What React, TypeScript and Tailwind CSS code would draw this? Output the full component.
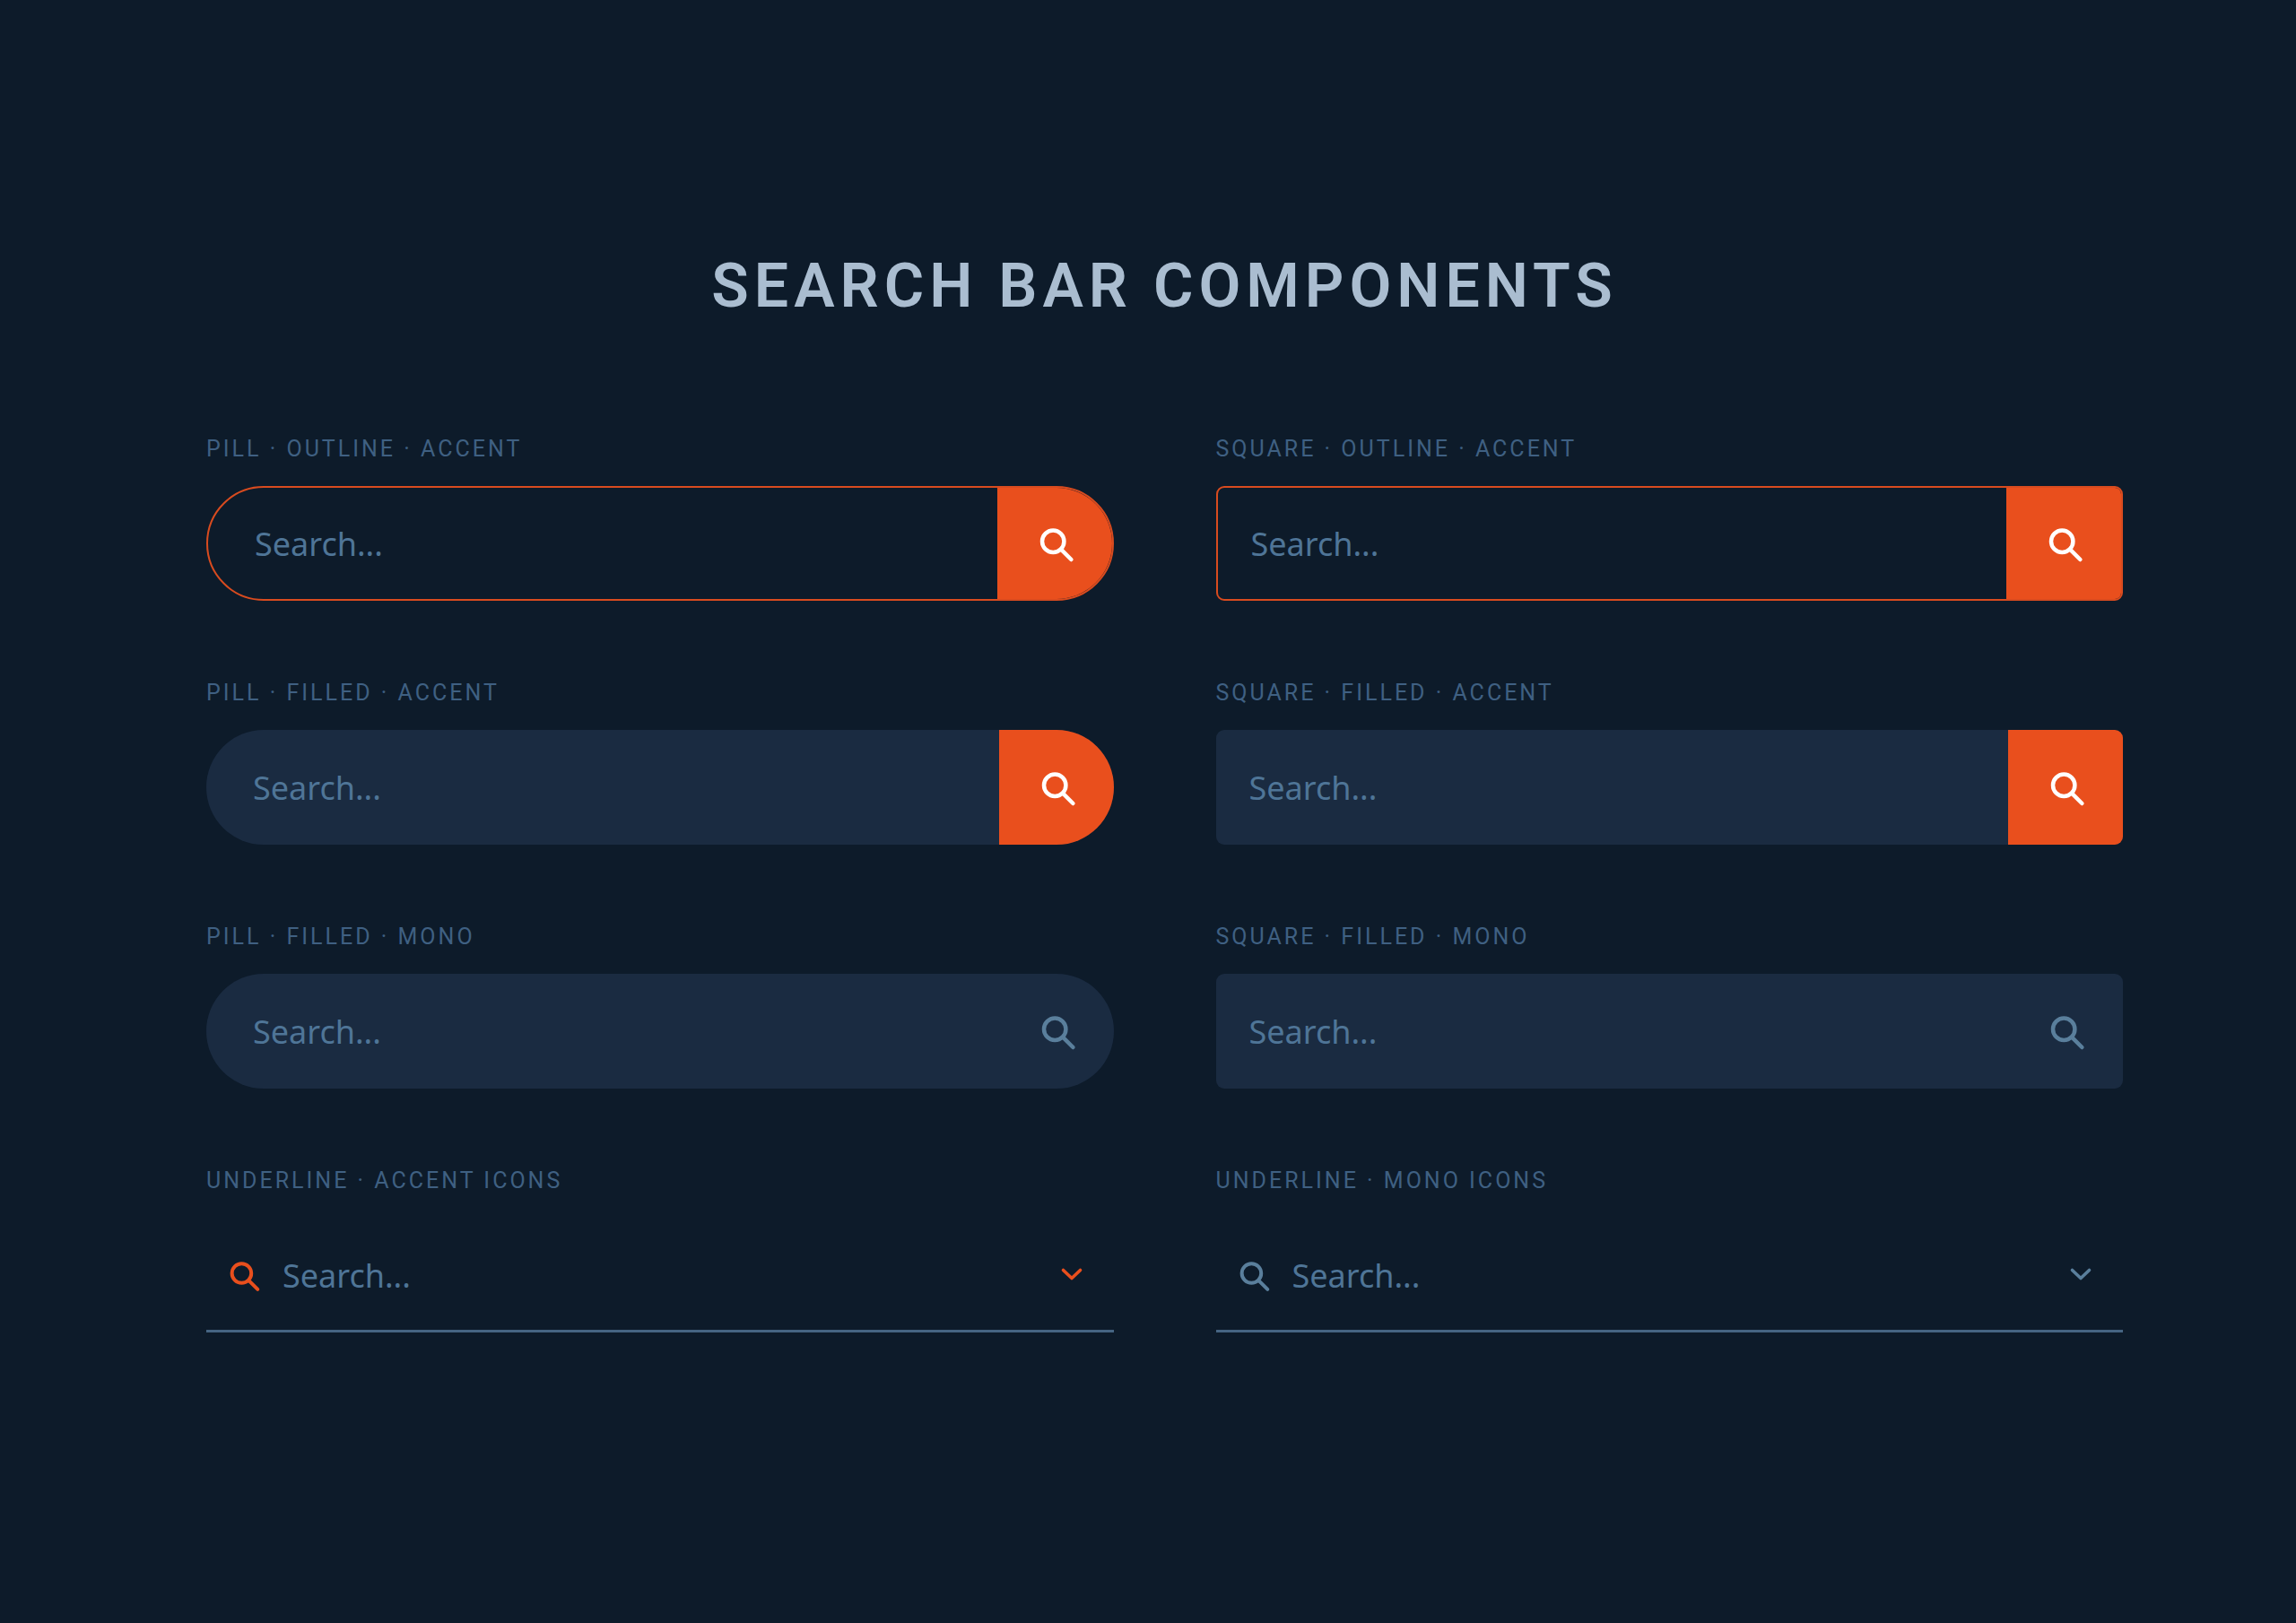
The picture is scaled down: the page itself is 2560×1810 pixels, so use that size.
type BarProps = { id: string; label: string };

type FieldProps = BarProps & {
  bar: string;
  padding: string;
  button: string;
};

function SearchIcon({ className }: { className: string }) {
  return (
    <svg viewBox="0 0 52 52" className={className} fill="none" stroke="currentColor" aria-hidden="true">
      <circle cx="24.2" cy="23.8" r="12.2" strokeWidth="4.5" />
      <path d="M33 32.6L44.4 44" strokeWidth="4.5" strokeLinecap="round" />
    </svg>
  );
}

function ChevronIcon() {
  return (
    <svg viewBox="0 0 32 32" className="size-8" fill="none" stroke="currentColor" strokeWidth="3.6" strokeLinecap="round" strokeLinejoin="round" aria-hidden="true">
      <path d="M6.5 10.5L16 19.5L25.5 10.5" />
    </svg>
  );
}

const inputClass =
  "h-full min-w-0 flex-1 bg-transparent font-['Noto_Sans',sans-serif] text-[36px] text-[#aabdd2] outline-none placeholder:text-[#4f7597] placeholder:opacity-100";

function Label({ id, label }: BarProps) {
  return (
    <label htmlFor={id} className="text-[25px] leading-[30px] tracking-[3px] text-[#3f6082] uppercase">
      {label}
    </label>
  );
}

function BoxField({ id, label, bar, padding, button }: FieldProps) {
  return (
    <div className="flex flex-col gap-[26px]">
      <Label id={id} label={label} />
      <div className={`flex h-32 overflow-hidden ${bar}`}>
        <input id={id} type="text" placeholder="Search..." className={`${inputClass} ${padding}`} />
        <button type="button" aria-label="Search" className={`flex w-32 shrink-0 items-center justify-center ${button}`}>
          <SearchIcon className="size-[52px]" />
        </button>
      </div>
    </div>
  );
}

function UnderlineField({ id, label, color }: BarProps & { color: string }) {
  return (
    <div className="flex flex-col gap-[26px]">
      <Label id={id} label={label} />
      <div className={`flex h-32 items-center border-b-3 border-[#456482] pt-[3px] pr-[31px] pl-[18px] ${color}`}>
        <SearchIcon className="size-[46px] shrink-0" />
        <input id={id} type="text" placeholder="Search..." className={`${inputClass} pl-[21px]`} />
        <button type="button" aria-label="Show options" className="shrink-0">
          <ChevronIcon />
        </button>
      </div>
    </div>
  );
}

const accent = "bg-[#e94f1d] text-white";
const mono = "text-[#5a7f9c]";

export default function App() {
  return (
    <main className="min-h-screen bg-[#0d1b2a] pt-[279px] pr-[193px] pb-24 pl-[230px] font-['Roboto',sans-serif]">
      <h1 className="mb-[127px] text-center text-[68px] leading-[80px] font-semibold tracking-[6px] text-[#aabdd0] uppercase">
        Search Bar Components
      </h1>
      <div className="grid grid-cols-2 gap-x-[114px] gap-y-[88px]">
        <BoxField id="pill-outline" label="Pill · Outline · Accent" bar="rounded-full border-2 border-[#d84b1f]" padding="pl-[52px]" button={accent} />
        <BoxField id="square-outline" label="Square · Outline · Accent" bar="rounded-[9px] border-2 border-[#d84b1f]" padding="pl-[37px]" button={accent} />
        <BoxField id="pill-filled" label="Pill · Filled · Accent" bar="rounded-full bg-[#1a2b41]" padding="pl-[52px]" button={accent} />
        <BoxField id="square-filled" label="Square · Filled · Accent" bar="rounded-[9px] bg-[#1a2b41]" padding="pl-[37px]" button={accent} />
        <BoxField id="pill-mono" label="Pill · Filled · Mono" bar="rounded-full bg-[#1a2b41]" padding="pl-[52px]" button={mono} />
        <BoxField id="square-mono" label="Square · Filled · Mono" bar="rounded-[9px] bg-[#1a2b41]" padding="pl-[37px]" button={mono} />
        <UnderlineField id="underline-accent" label="Underline · Accent Icons" color="text-[#e94f1d]" />
        <UnderlineField id="underline-mono" label="Underline · Mono Icons" color="text-[#5a7f9c]" />
      </div>
    </main>
  );
}
